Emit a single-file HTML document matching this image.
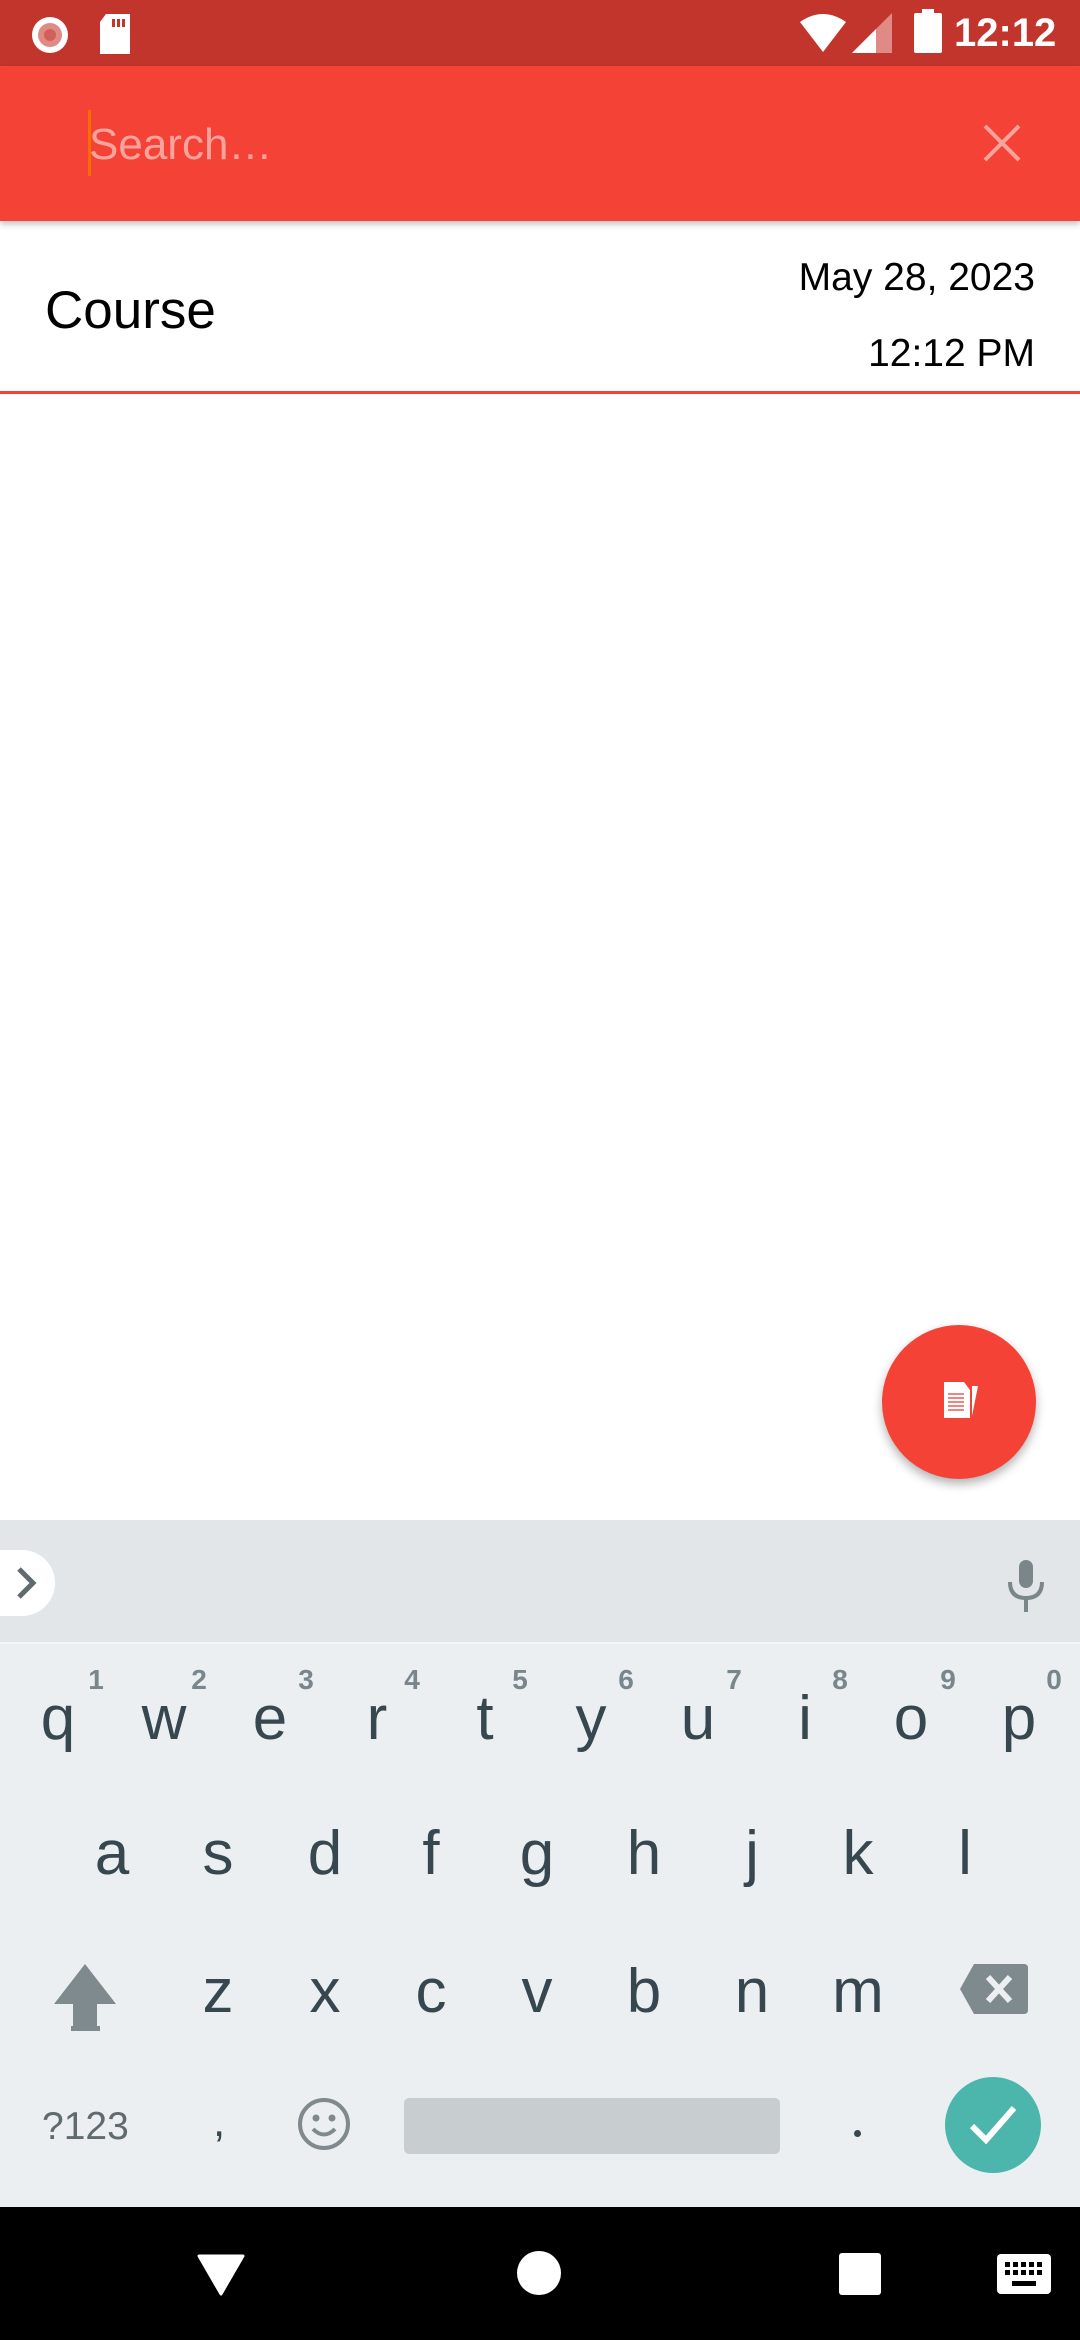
<!DOCTYPE html>
<html><head><meta charset="utf-8"><style>
*{margin:0;padding:0;box-sizing:border-box}
body{width:1080px;height:2340px;position:relative;overflow:hidden;background:#fff;font-family:"Liberation Sans",Roboto,sans-serif}
.a{position:absolute;line-height:1;white-space:nowrap}
.k{position:absolute;line-height:1;font-size:62px;color:#37474f;transform:translateX(-50%)}
.d{position:absolute;line-height:1;font-size:28px;font-weight:bold;color:#78868d;transform:translateX(-50%)}
</style></head><body>
<div class="a" style="left:0;top:0;width:1080px;height:66px;background:#c2352d"></div>
<svg class="a" style="left:28px;top:13px" width="44" height="44"><circle cx="22" cy="22" r="18" fill="#fff"/><circle cx="22" cy="22" r="12" fill="#e08a86"/><circle cx="22" cy="22" r="6" fill="#d1605a"/></svg>
<svg class="a" style="left:98px;top:14px" width="34" height="40"><path d="M8 0H32V40H2V8Z" fill="#fff"/><rect x="14" y="5" width="3" height="8" fill="#c2352d"/><rect x="19" y="5" width="3" height="8" fill="#c2352d"/><rect x="24" y="5" width="3" height="8" fill="#c2352d"/></svg>
<svg class="a" style="left:798px;top:12px" width="50" height="42"><path d="M2 10Q25 -6 48 10L25 40Z" fill="#fff"/></svg>
<svg class="a" style="left:852px;top:13px" width="42" height="40"><path d="M0 40L40 0V40Z" fill="#e08a86"/><path d="M0 40L24 16V40Z" fill="#fff"/></svg>
<div class="a" style="left:914px;top:13px;width:28px;height:40px;background:#fff;border-radius:2px"></div>
<div class="a" style="left:922px;top:9px;width:12px;height:6px;background:#fff"></div>
<div class="a" style="left:954px;top:13px;font-size:40px;font-weight:bold;color:#fff">12:12</div>
<div class="a" style="left:0;top:66px;width:1080px;height:155px;background:#f44336;box-shadow:0 3px 6px rgba(0,0,0,.25)"></div>
<div class="a" style="left:88px;top:110px;width:3px;height:66px;background:#ff6d00"></div>
<div class="a" style="left:89px;top:123px;font-size:44px;color:#f8a49d">Search…</div>
<svg class="a" style="left:983px;top:124px" width="38" height="38"><path d="M2 2L36 36M36 2L2 36" stroke="#f8a49d" stroke-width="4"/></svg>
<div class="a" style="left:45px;top:284px;font-size:53px;color:#000">Course</div>
<div class="a" style="right:45px;top:258px;font-size:39px;color:#000">May 28, 2023</div>
<div class="a" style="right:45px;top:334px;font-size:39px;color:#000">12:12 PM</div>
<div class="a" style="left:0;top:391px;width:1080px;height:3px;background:#f44336"></div>
<div class="a" style="left:882px;top:1325px;width:154px;height:154px;border-radius:50%;background:#f44336;box-shadow:0 5px 10px rgba(0,0,0,.3)"></div>
<svg class="a" style="left:942px;top:1380px" width="40" height="40"><path d="M2 2H22L28 10V38H2Z" fill="#fff"/><g stroke="#f0857e" stroke-width="2"><path d="M6 14H22M6 18H22M6 22H22M6 26H22M6 30H22"/></g><path d="M30 6L36 6L30 36Z" fill="#fff"/></svg>
<div class="a" style="left:0;top:1520px;width:1080px;height:122px;background:#e2e6e9"></div>
<div class="a" style="left:-30px;top:1550px;width:85px;height:66px;border-radius:33px;background:#fff"></div>
<svg class="a" style="left:14px;top:1566px" width="26" height="34"><path d="M5 3L19 17L5 31" stroke="#5f6b70" stroke-width="5" fill="none"/></svg>
<svg class="a" style="left:1006px;top:1560px" width="40" height="52"><rect x="13" y="0" width="14" height="28" rx="7" fill="#7b868b"/><path d="M4 22Q4 38 20 38Q36 38 36 22" stroke="#7b868b" stroke-width="4" fill="none"/><path d="M20 38V52" stroke="#7b868b" stroke-width="4"/></svg>
<div class="a" style="left:0;top:1642px;width:1080px;height:565px;background:#eceff1;border-top:2px solid #f3f5f7"></div>
<div class="k" style="left:58px;top:1688px">q</div><div class="k" style="left:164px;top:1688px">w</div><div class="k" style="left:270px;top:1688px">e</div><div class="k" style="left:377px;top:1688px">r</div><div class="k" style="left:485px;top:1688px">t</div><div class="k" style="left:591px;top:1688px">y</div><div class="k" style="left:698px;top:1688px">u</div><div class="k" style="left:805px;top:1688px">i</div><div class="k" style="left:911px;top:1688px">o</div><div class="k" style="left:1019px;top:1688px">p</div>
<div class="d" style="left:96px;top:1666px">1</div><div class="d" style="left:199px;top:1666px">2</div><div class="d" style="left:306px;top:1666px">3</div><div class="d" style="left:412px;top:1666px">4</div><div class="d" style="left:520px;top:1666px">5</div><div class="d" style="left:626px;top:1666px">6</div><div class="d" style="left:734px;top:1666px">7</div><div class="d" style="left:840px;top:1666px">8</div><div class="d" style="left:948px;top:1666px">9</div><div class="d" style="left:1054px;top:1666px">0</div>
<div class="k" style="left:112px;top:1823px">a</div><div class="k" style="left:218px;top:1823px">s</div><div class="k" style="left:325px;top:1823px">d</div><div class="k" style="left:431px;top:1823px">f</div><div class="k" style="left:537px;top:1823px">g</div><div class="k" style="left:644px;top:1823px">h</div><div class="k" style="left:752px;top:1823px">j</div><div class="k" style="left:858px;top:1823px">k</div><div class="k" style="left:965px;top:1823px">l</div>
<svg class="a" style="left:52px;top:1962px" width="66" height="70"><path d="M33 2L64 42H45V64H21V42H2Z" fill="#7f8a8e"/></svg>
<div class="a" style="left:71px;top:2026px;width:29px;height:5px;background:#7f8a8e"></div>
<div class="k" style="left:218px;top:1961px">z</div><div class="k" style="left:325px;top:1961px">x</div><div class="k" style="left:431px;top:1961px">c</div><div class="k" style="left:537px;top:1961px">v</div><div class="k" style="left:644px;top:1961px">b</div><div class="k" style="left:752px;top:1961px">n</div><div class="k" style="left:858px;top:1961px">m</div>
<svg class="a" style="left:960px;top:1964px" width="68" height="50"><path d="M14 0H64Q68 0 68 4V46Q68 50 64 50H14L0 25Z" fill="#7f8a8e"/><path d="M28 13L50 37M50 13L28 37" stroke="#eceff1" stroke-width="6"/></svg>
<div class="a" style="left:42px;top:2107px;font-size:39px;color:#5f6b70">?123</div>
<div class="a" style="left:213px;top:2100px;font-size:44px;color:#37474f">,</div>
<svg class="a" style="left:296px;top:2096px" width="56" height="56"><circle cx="28" cy="28" r="24" stroke="#7f8a8e" stroke-width="4" fill="none"/><circle cx="20" cy="22" r="3.5" fill="#7f8a8e"/><circle cx="36" cy="22" r="3.5" fill="#7f8a8e"/><path d="M17 33Q28 44 39 33" stroke="#7f8a8e" stroke-width="4" fill="none"/></svg>
<div class="a" style="left:404px;top:2098px;width:376px;height:56px;border-radius:5px;background:#c8cdd0"></div>
<div class="a" style="left:854px;top:2130px;width:7px;height:7px;border-radius:50%;background:#37474f"></div>
<div class="a" style="left:945px;top:2077px;width:96px;height:96px;border-radius:50%;background:#4db6ac"></div>
<svg class="a" style="left:968px;top:2104px" width="50" height="42"><path d="M4 22L18 36L46 4" stroke="#fff" stroke-width="6" fill="none"/></svg>
<div class="a" style="left:0;top:2207px;width:1080px;height:133px;background:#000"></div>
<svg class="a" style="left:197px;top:2254px" width="48" height="42"><path d="M2 2H46L24 40Z" fill="#fff" stroke="#fff" stroke-width="3" stroke-linejoin="round"/></svg>
<div class="a" style="left:517px;top:2251px;width:44px;height:44px;border-radius:50%;background:#fff"></div>
<div class="a" style="left:839px;top:2253px;width:42px;height:42px;border-radius:3px;background:#fff"></div>
<svg class="a" style="left:997px;top:2254px" width="54" height="40"><rect width="54" height="40" rx="4" fill="#fff"/><g fill="#000"><rect x="8" y="8" width="5" height="5"/><rect x="16" y="8" width="5" height="5"/><rect x="24" y="8" width="5" height="5"/><rect x="32" y="8" width="5" height="5"/><rect x="40" y="8" width="5" height="5"/><rect x="8" y="16" width="5" height="5"/><rect x="16" y="16" width="5" height="5"/><rect x="24" y="16" width="5" height="5"/><rect x="32" y="16" width="5" height="5"/><rect x="40" y="16" width="5" height="5"/><rect x="15" y="27" width="24" height="5"/></g></svg>
</body></html>
